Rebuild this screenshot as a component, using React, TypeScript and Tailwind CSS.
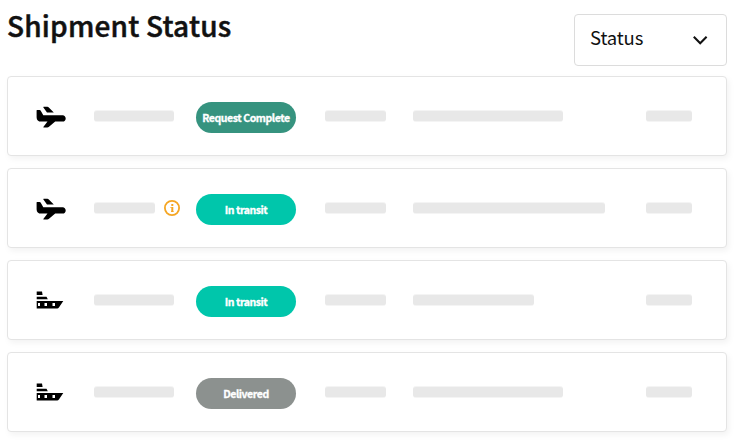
import clsx from 'clsx';

type Shipment = {
  mode: 'air' | 'sea';
  status: string;
  badge: string;
  alert?: boolean;
  detail: string;
};

const shipments: Shipment[] = [
  { mode: 'air', status: 'Request Complete', badge: 'bg-[#36937f]', detail: 'w-[150px]' },
  { mode: 'air', status: 'In transit', badge: 'bg-[#00c6ab]', alert: true, detail: 'w-[192px]' },
  { mode: 'sea', status: 'In transit', badge: 'bg-[#00c6ab]', detail: 'w-[121px]' },
  { mode: 'sea', status: 'Delivered', badge: 'bg-[#8c918f]', detail: 'w-[150px]' },
];

function PlaneIcon() {
  return (
    <svg width="30" height="22" viewBox="0 0 30 22" fill="#000">
      <path d="M8 .8h3.4c.6 0 1 .2 1.4.6L17.8 6.6H11L7.4 1.6C7.1 1.2 7.4.8 8 .8Z" />
      <path d="M1 4h2.6c.5 0 .8.2 1 .6l2.7 4.7h19.4c1.7 0 3 1.4 3 3.1s-1.3 3.2-3 3.2h-7.5l-6.5 5.5c-.4.3-.8.5-1.4.5H8c-.6 0-.8-.4-.5-.9l4-5.1H5.2C2.3 15.600.6 14.2.6 11.2V4.5C.6 4.2.7 4 1 4Z" />
    </svg>
  );
}

function ShipIcon() {
  return (
    <svg width="30" height="22" viewBox="0 0 30 22" fill="#000">
      <path d="M.7 1.600h5.300l.6 3.400H.7ZM.7 6.800h9.800l1.300 2.400H.7Z" />
      <path
        fillRule="evenodd"
        d="M.7 11h26.600l-4.400 6.600c-.5.700-1 1-1.700 1H.7ZM2 13v3h2v-3ZM8.500 13v3h2.500v-3ZM16.500 13v3H19v-3Z"
      />
    </svg>
  );
}

function InfoIcon() {
  return (
    <svg width="16" height="16" viewBox="0 0 16 16" fill="none" stroke="#f5a623">
      <circle cx="8" cy="8" r="7.1" strokeWidth="1.8" />
      <path d="M6.500 7.500h1M7.200 11.500h2.300" strokeWidth="1.200" />
      <path d="M8.300 4v2M8.300 7v5" strokeWidth="2" />
    </svg>
  );
}

function Bar({ className }: { className: string }) {
  return <div className={clsx('h-3 rounded-[3px] border-y border-[#f4f4f4] bg-[#e8e8e8]', className)} />;
}

function ShipmentRow({ shipment }: { shipment: Shipment }) {
  return (
    <div className="flex h-20 items-start rounded border border-[#e4e4e4] bg-white pl-7 shadow-[2px_3px_6px_rgba(0,0,0,0.05)]">
      <div className="mt-[29px] w-[58px]">
        {shipment.mode === 'air' ? <PlaneIcon /> : <ShipIcon />}
      </div>
      <div className="mt-[31px] flex h-4 w-[102px] items-center gap-[9px]">
        <Bar className={shipment.alert ? 'w-[61px]' : 'w-20'} />
        {shipment.alert && <InfoIcon />}
      </div>
      <div
        className={clsx(
          'mt-[25px] flex h-[31px] w-[100px] items-center justify-center rounded-full pt-px text-[10.5px] font-bold tracking-[-0.43px] whitespace-nowrap text-white [-webkit-text-stroke:0.3px_white]',
          shipment.badge
        )}
      >
        {shipment.status}
      </div>
      <Bar className="mt-[33px] ml-[29px] w-[61px]" />
      <div className="mt-[33px] ml-[27px] w-[233px]">
        <Bar className={shipment.detail} />
      </div>
      <Bar className="mt-[33px] w-[46px]" />
    </div>
  );
}

export default function App() {
  return (
    <div className="h-[443px] overflow-hidden bg-white pr-[11px] pl-[7px] font-['Noto_Sans_CJK_SC','Noto_Sans',sans-serif] text-[#111]">
      <div className="flex h-[76px] items-start justify-between">
        <h1 className="mt-[5px] text-[28px] leading-[40px] font-medium tracking-[0.2px] [-webkit-text-stroke:0.5px_#111]">
          Shipment Status
        </h1>
        <button className="mt-[14px] flex h-[52px] w-[153px] items-center justify-between rounded border border-[#dcdcdc] bg-white pr-[18px] pl-[15px]">
          <span className="-mt-1.5 text-[18.5px] leading-6 tracking-[-0.15px]">Status</span>
          <svg width="16" height="10" viewBox="0 0 16 10" fill="none" stroke="#111" strokeWidth="2.1">
            <path d="M1.8 1.8 8.2 8.2l6.4-6.4" />
          </svg>
        </button>
      </div>
      <div className="flex flex-col gap-3">
        {shipments.map((shipment, i) => (
          <ShipmentRow key={i} shipment={shipment} />
        ))}
      </div>
    </div>
  );
}
